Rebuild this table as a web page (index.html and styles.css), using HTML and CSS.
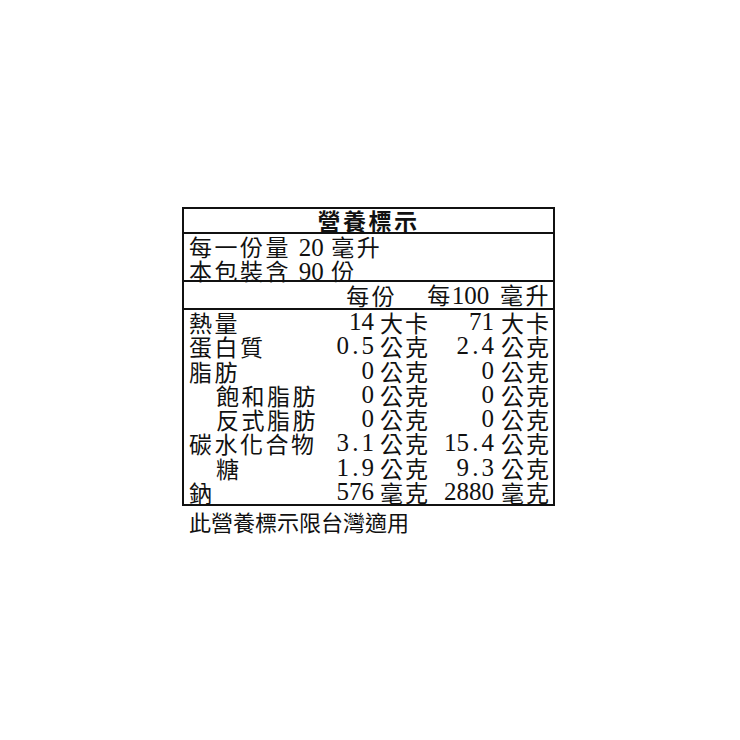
FILE: index.html
```html
<!DOCTYPE html>
<html lang="zh-Hant">
<head>
<meta charset="utf-8">
<title>營養標示</title>
<link rel="stylesheet" href="styles.css">
</head>
<body>
<div class="page">
  <div class="label">
    <div class="title">營養標示</div>
    <div class="serving">
      <div class="line">每一份量 <span class="n">20</span> 毫升</div>
      <div class="line">本包裝含 <span class="n">90</span> 份</div>
    </div>
    <div class="head">
      <span class="h1">每份</span>
      <span class="h2">每<span class="n">100</span> 毫升</span>
    </div>
    <div class="rows">
      <div class="name">熱量</div><div class="v n">14</div><div class="u">大卡</div><div class="v n">71</div><div class="u u2">大卡</div>
      <div class="name">蛋白質</div><div class="v n">0<span class="dot">.</span>5</div><div class="u">公克</div><div class="v n">2<span class="dot">.</span>4</div><div class="u u2">公克</div>
      <div class="name">脂肪</div><div class="v n">0</div><div class="u">公克</div><div class="v n">0</div><div class="u u2">公克</div>
      <div class="name sub">飽和脂肪</div><div class="v n">0</div><div class="u">公克</div><div class="v n">0</div><div class="u u2">公克</div>
      <div class="name sub">反式脂肪</div><div class="v n">0</div><div class="u">公克</div><div class="v n">0</div><div class="u u2">公克</div>
      <div class="name">碳水化合物</div><div class="v n">3<span class="dot">.</span>1</div><div class="u">公克</div><div class="v n">15<span class="dot">.</span>4</div><div class="u u2">公克</div>
      <div class="name sub">糖</div><div class="v n">1<span class="dot">.</span>9</div><div class="u">公克</div><div class="v n">9<span class="dot">.</span>3</div><div class="u u2">公克</div>
      <div class="name">鈉</div><div class="v n">576</div><div class="u">毫克</div><div class="v n">2880</div><div class="u u2">毫克</div>
    </div>
  </div>
  <div class="note">此營養標示限台灣適用</div>
</div>
</body>
</html>
```
FILE: styles.css
```css
html, body {
  margin: 0;
  padding: 0;
  background: #ffffff;
}

body {
  font-family: "Noto Sans CJK TC", "Noto Sans CJK SC", sans-serif;
  font-size: 23px;
  color: #111111;
}

.page {
  padding: 207px 0 0 182px;
}

.label {
  width: 373px;
  box-sizing: border-box;
  border: 2px solid #111111;
}

.title {
  height: 23px;
  line-height: 23px;
  text-align: center;
  font-weight: 700;
  letter-spacing: 2.5px;
  border-bottom: 2px solid #111111;
}

.serving {
  height: 48px;
  box-sizing: border-box;
  padding: 1px 0 0 5px;
  border-bottom: 2px solid #111111;
}

.line {
  height: 23.5px;
  line-height: 23.5px;
  letter-spacing: 2.5px;
  white-space: nowrap;
}

.n {
  font-family: "Liberation Serif", serif;
  font-size: 25px;
  letter-spacing: 0;
}

.dot {
  display: inline-block;
  width: 0.5em;
  text-align: center;
}

.head {
  height: 26px;
  line-height: 26px;
  display: flex;
  justify-content: flex-end;
  align-items: center;
  gap: 30px;
  padding-right: 2px;
  letter-spacing: 2.5px;
  white-space: nowrap;
  border-bottom: 2px solid #111111;
}

.h2 .n {
  margin: 0 3px 0 -1px;
}

.rows {
  display: grid;
  grid-template-columns: 146px 44px 58px 62px 59px;
  grid-auto-rows: 24.25px;
  align-items: center;
  white-space: nowrap;
}

.rows > div {
  line-height: 24px;
}

.name {
  padding-left: 5px;
  letter-spacing: 2.5px;
}

.name.sub {
  padding-left: 32px;
}

.v {
  text-align: right;
}

.u {
  padding-left: 6px;
  letter-spacing: 2px;
}

.u.u2 {
  padding-left: 7px;
}

.note {
  margin-top: 2px;
  padding-left: 7px;
  height: 26px;
  line-height: 26px;
  font-size: 22px;
}
```
